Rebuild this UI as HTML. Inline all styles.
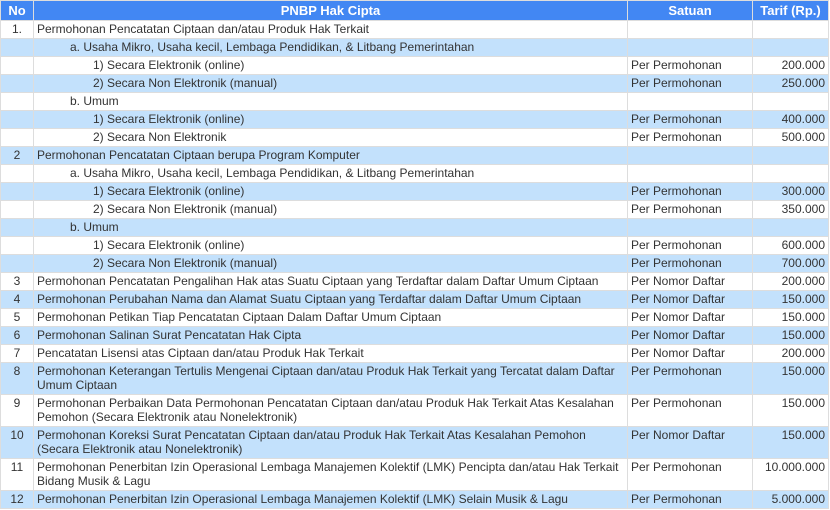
<!DOCTYPE html>
<html><head><meta charset="utf-8"><style>
body{margin:0;background:#fff;}
table{border-collapse:collapse;width:828px;table-layout:fixed;font-family:"Liberation Sans",Arial,sans-serif;font-size:12px;color:#333;}
td,th{border:1px solid #ddd;padding:1px 3px 2px;line-height:14px;vertical-align:top;}
th{background:#4287f3;color:#fff;font-weight:bold;text-align:center;padding:2px 3px 2px;line-height:15px;font-size:13px;}
tbody tr:nth-child(even) td{background:#c3e1fc;}
td.n{text-align:center;}
td.r{text-align:right;}
.a{padding-left:36px;}
.s{padding-left:59px;}
</style></head><body>
<table>
<colgroup><col style="width:33px"><col style="width:594px"><col style="width:125px"><col style="width:76px"></colgroup>
<thead><tr><th>No</th><th>PNBP Hak Cipta</th><th>Satuan</th><th>Tarif (Rp.)</th></tr></thead>
<tbody>
<tr><td class="n">1.</td><td>Permohonan Pencatatan Ciptaan dan/atau Produk Hak Terkait</td><td></td><td></td></tr>
<tr><td></td><td class="a">a. Usaha Mikro, Usaha kecil, Lembaga Pendidikan, &amp; Litbang Pemerintahan</td><td></td><td></td></tr>
<tr><td></td><td class="s">1) Secara Elektronik (online)</td><td>Per Permohonan</td><td class="r">200.000</td></tr>
<tr><td></td><td class="s">2) Secara Non Elektronik (manual)</td><td>Per Permohonan</td><td class="r">250.000</td></tr>
<tr><td></td><td class="a">b. Umum</td><td></td><td></td></tr>
<tr><td></td><td class="s">1) Secara Elektronik (online)</td><td>Per Permohonan</td><td class="r">400.000</td></tr>
<tr><td></td><td class="s">2) Secara Non Elektronik</td><td>Per Permohonan</td><td class="r">500.000</td></tr>
<tr><td class="n">2</td><td>Permohonan Pencatatan Ciptaan berupa Program Komputer</td><td></td><td></td></tr>
<tr><td></td><td class="a">a. Usaha Mikro, Usaha kecil, Lembaga Pendidikan, &amp; Litbang Pemerintahan</td><td></td><td></td></tr>
<tr><td></td><td class="s">1) Secara Elektronik (online)</td><td>Per Permohonan</td><td class="r">300.000</td></tr>
<tr><td></td><td class="s">2) Secara Non Elektronik (manual)</td><td>Per Permohonan</td><td class="r">350.000</td></tr>
<tr><td></td><td class="a">b. Umum</td><td></td><td></td></tr>
<tr><td></td><td class="s">1) Secara Elektronik (online)</td><td>Per Permohonan</td><td class="r">600.000</td></tr>
<tr><td></td><td class="s">2) Secara Non Elektronik (manual)</td><td>Per Permohonan</td><td class="r">700.000</td></tr>
<tr><td class="n">3</td><td>Permohonan Pencatatan Pengalihan Hak atas Suatu Ciptaan yang Terdaftar dalam Daftar Umum Ciptaan</td><td>Per Nomor Daftar</td><td class="r">200.000</td></tr>
<tr><td class="n">4</td><td>Permohonan Perubahan Nama dan Alamat Suatu Ciptaan yang Terdaftar dalam Daftar Umum Ciptaan</td><td>Per Nomor Daftar</td><td class="r">150.000</td></tr>
<tr><td class="n">5</td><td>Permohonan Petikan Tiap Pencatatan Ciptaan Dalam Daftar Umum Ciptaan</td><td>Per Nomor Daftar</td><td class="r">150.000</td></tr>
<tr><td class="n">6</td><td>Permohonan Salinan Surat Pencatatan Hak Cipta</td><td>Per Nomor Daftar</td><td class="r">150.000</td></tr>
<tr><td class="n">7</td><td>Pencatatan Lisensi atas Ciptaan dan/atau Produk Hak Terkait</td><td>Per Nomor Daftar</td><td class="r">200.000</td></tr>
<tr><td class="n">8</td><td>Permohonan Keterangan Tertulis Mengenai Ciptaan dan/atau Produk Hak Terkait yang Tercatat dalam Daftar Umum Ciptaan</td><td>Per Permohonan</td><td class="r">150.000</td></tr>
<tr><td class="n">9</td><td>Permohonan Perbaikan Data Permohonan Pencatatan Ciptaan dan/atau Produk Hak Terkait Atas Kesalahan Pemohon (Secara Elektronik atau Nonelektronik)</td><td>Per Permohonan</td><td class="r">150.000</td></tr>
<tr><td class="n">10</td><td>Permohonan Koreksi Surat Pencatatan Ciptaan dan/atau Produk Hak Terkait Atas Kesalahan Pemohon (Secara Elektronik atau Nonelektronik)</td><td>Per Nomor Daftar</td><td class="r">150.000</td></tr>
<tr><td class="n">11</td><td>Permohonan Penerbitan Izin Operasional Lembaga Manajemen Kolektif (LMK) Pencipta dan/atau Hak Terkait Bidang Musik &amp; Lagu</td><td>Per Permohonan</td><td class="r">10.000.000</td></tr>
<tr><td class="n">12</td><td>Permohonan Penerbitan Izin Operasional Lembaga Manajemen Kolektif (LMK) Selain Musik &amp; Lagu</td><td>Per Permohonan</td><td class="r">5.000.000</td></tr>
</tbody></table>
</body></html>
